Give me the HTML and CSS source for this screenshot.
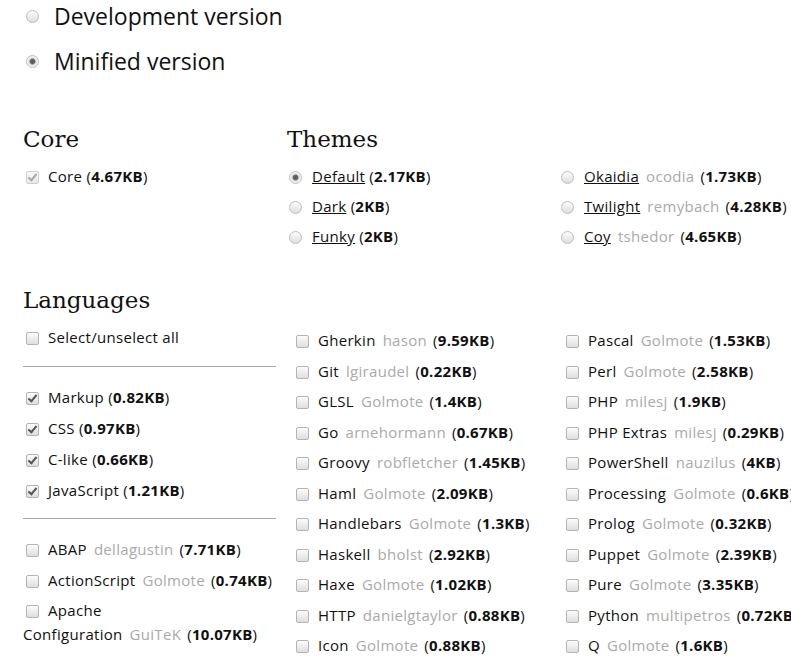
FILE: index.html
```html
<!DOCTYPE html>
<html>
<head>
<meta charset="utf-8">
<link rel="stylesheet" href="styles.css">
</head>
<body>
<div class="page">
  <div class="versions">
    <label class="version"><input type="radio" name="v"> Development version</label>
    <label class="version"><input type="radio" name="v" checked> Minified version</label>
  </div>

  <div class="top">
    <section class="core">
      <h2>Core</h2>
      <label class="opt"><input type="checkbox" checked disabled>Core <span class="kb-wrap">(<b>4.67KB</b>)</span></label>
    </section>
    <section class="themes">
      <h2>Themes</h2>
      <div class="theme-grid">
        <label class="opt"><input type="radio" name="t" checked><a>Default</a> (<b>2.17KB</b>)</label>
        <label class="opt"><input type="radio" name="t"><a>Okaidia</a><span class="owner">ocodia</span>(<b>1.73KB</b>)</label>
        <label class="opt"><input type="radio" name="t"><a>Dark</a> (<b>2KB</b>)</label>
        <label class="opt"><input type="radio" name="t"><a>Twilight</a><span class="owner">remybach</span>(<b>4.28KB</b>)</label>
        <label class="opt"><input type="radio" name="t"><a>Funky</a> (<b>2KB</b>)</label>
        <label class="opt"><input type="radio" name="t"><a>Coy</a><span class="owner">tshedor</span>(<b>4.65KB</b>)</label>
      </div>
    </section>
  </div>

  <section class="languages">
    <h2>Languages</h2>
    <div class="lang-cols">
      <div class="col first">
        <label class="opt"><input type="checkbox">Select/unselect all</label>
        <hr class="hr-top">
        <div class="required">
          <label class="opt"><input type="checkbox" checked>Markup (<b>0.82KB</b>)</label>
          <label class="opt"><input type="checkbox" checked>CSS (<b>0.97KB</b>)</label>
          <label class="opt"><input type="checkbox" checked>C-like (<b>0.66KB</b>)</label>
          <label class="opt"><input type="checkbox" checked>JavaScript (<b>1.21KB</b>)</label>
        </div>
        <hr class="hr-bottom">
        <label class="opt"><input type="checkbox">ABAP<span class="owner">dellagustin</span>(<b>7.71KB</b>)</label>
        <label class="opt"><input type="checkbox">ActionScript<span class="owner">Golmote</span>(<b>0.74KB</b>)</label>
        <label class="opt"><input type="checkbox">Apache<br>Configuration<span class="owner">GuiTeK</span>(<b>10.07KB</b>)</label>
      </div>
      <div class="col">
        <label class="opt"><input type="checkbox">Gherkin<span class="owner">hason</span>(<b>9.59KB</b>)</label>
        <label class="opt"><input type="checkbox">Git<span class="owner">lgiraudel</span>(<b>0.22KB</b>)</label>
        <label class="opt"><input type="checkbox">GLSL<span class="owner">Golmote</span>(<b>1.4KB</b>)</label>
        <label class="opt"><input type="checkbox">Go<span class="owner">arnehormann</span>(<b>0.67KB</b>)</label>
        <label class="opt"><input type="checkbox">Groovy<span class="owner">robfletcher</span>(<b>1.45KB</b>)</label>
        <label class="opt"><input type="checkbox">Haml<span class="owner">Golmote</span>(<b>2.09KB</b>)</label>
        <label class="opt"><input type="checkbox">Handlebars<span class="owner">Golmote</span>(<b>1.3KB</b>)</label>
        <label class="opt"><input type="checkbox">Haskell<span class="owner">bholst</span>(<b>2.92KB</b>)</label>
        <label class="opt"><input type="checkbox">Haxe<span class="owner">Golmote</span>(<b>1.02KB</b>)</label>
        <label class="opt"><input type="checkbox">HTTP<span class="owner">danielgtaylor</span>(<b>0.88KB</b>)</label>
        <label class="opt"><input type="checkbox">Icon<span class="owner">Golmote</span>(<b>0.88KB</b>)</label>
      </div>
      <div class="col">
        <label class="opt"><input type="checkbox">Pascal<span class="owner">Golmote</span>(<b>1.53KB</b>)</label>
        <label class="opt"><input type="checkbox">Perl<span class="owner">Golmote</span>(<b>2.58KB</b>)</label>
        <label class="opt"><input type="checkbox">PHP<span class="owner">milesj</span>(<b>1.9KB</b>)</label>
        <label class="opt"><input type="checkbox">PHP Extras<span class="owner">milesj</span>(<b>0.29KB</b>)</label>
        <label class="opt"><input type="checkbox">PowerShell<span class="owner">nauzilus</span>(<b>4KB</b>)</label>
        <label class="opt"><input type="checkbox">Processing<span class="owner">Golmote</span>(<b>0.6KB</b>)</label>
        <label class="opt"><input type="checkbox">Prolog<span class="owner">Golmote</span>(<b>0.32KB</b>)</label>
        <label class="opt"><input type="checkbox">Puppet<span class="owner">Golmote</span>(<b>2.39KB</b>)</label>
        <label class="opt"><input type="checkbox">Pure<span class="owner">Golmote</span>(<b>3.35KB</b>)</label>
        <label class="opt"><input type="checkbox">Python<span class="owner">multipetros</span>(<b>0.72KB</b>)</label>
        <label class="opt"><input type="checkbox">Q<span class="owner">Golmote</span>(<b>1.6KB</b>)</label>
      </div>
    </div>
  </section>
</div>
</body>
</html>
```
FILE: styles.css
```css
html, body {
  margin: 0;
  padding: 0;
  background: #fff;
  overflow: hidden;
}
body {
  font-family: "Open Sans", "DejaVu Sans", sans-serif;
  font-size: 15px;
  letter-spacing: 0.3px;
  color: #111;
}
.page {
  padding-left: 23px;
  width: 830px;
}
.versions {
  display: flex;
  flex-direction: column;
  gap: 13px;
}
.version {
  display: flex;
  align-items: center;
  height: 32px;
  font-size: 23px;
  letter-spacing: 0;
  gap: 6px;
}
.version input {
  margin: 0 0 0 4px;
}
.top {
  display: grid;
  grid-template-columns: 264px 1fr;
  margin-top: 47px;
}
h2 {
  font-family: "DejaVu Serif", "Liberation Serif", serif;
  font-weight: normal;
  font-size: 23px;
  line-height: 30px;
  letter-spacing: 0;
  margin: 0 0 7px 0;
  color: #111;
}
.opt {
  display: block;
  line-height: 24px;
  padding: 3px 0;
  white-space: nowrap;
}
.opt b {
  font-weight: bold;
}
.opt a {
  color: #111;
  text-decoration: underline;
}
.owner {
  color: #aaa;
  padding: 0 6px 0 7px;
}
input[type=checkbox], input[type=radio] {
  -webkit-appearance: none;
  appearance: none;
  width: 13px;
  height: 13px;
  margin: 0 9px 0 3px;
  vertical-align: -2px;
  box-sizing: border-box;
  border: 1px solid #b4b4b4;
  background: linear-gradient(#fcfcfc, #dedede);
  position: relative;
}
input[type=checkbox] {
  border-radius: 2px;
}
input[type=checkbox]:checked::after {
  content: "";
  position: absolute;
  left: 3px;
  top: 0px;
  width: 3px;
  height: 7px;
  border: solid #555;
  border-width: 0 2px 2px 0;
  transform: rotate(40deg);
}
input[type=checkbox]:disabled {
  border-color: #cfcfcf;
  background: linear-gradient(#f8f8f8, #e8e8e8);
}
input[type=checkbox]:disabled::after {
  border-color: #aaa !important;
}
input[type=radio] {
  border-radius: 50%;
  border-color: #bdbdbd;
}
input[type=radio]:checked {
  background: radial-gradient(circle, #555 0, #666 2.2px, #ddd 3.5px, #f4f4f4 5px);
}
.themes .opt input {
  margin: 0 10px 0 2px;
}
.theme-grid {
  display: grid;
  grid-template-columns: 272px 272px;
}
.languages {
  margin-top: 34px;
}
.lang-cols {
  display: grid;
  grid-template-columns: 253px 253px 253px;
  column-gap: 17px;
}
.col {
  padding-top: 3px;
}
.col.first {
  padding-top: 0;
}
.col .opt {
  padding: 3.25px 0;
}
.col .required .opt {
  padding: 3.5px 0;
}
hr {
  border: 0;
  border-top: 1px solid #a8a8a8;
}
.hr-top {
  margin: 13px 0 14.5px 0;
}
.hr-bottom {
  margin: 12.5px 0 15.5px 0;
}
```
